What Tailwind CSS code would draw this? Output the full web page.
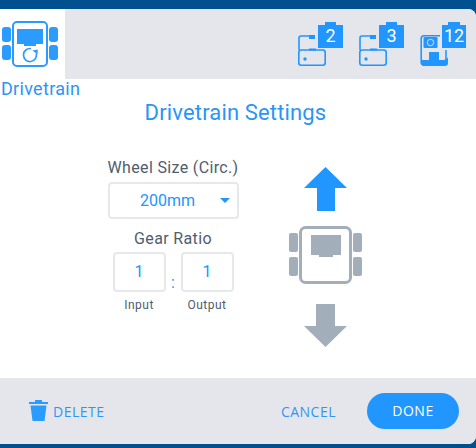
<!DOCTYPE html>
<html><head><meta charset="utf-8"><script src="https://cdn.jsdelivr.net/npm/@tailwindcss/browser@4"></script></head>
<body class="bg-[#00508f] m-0">
<div class="w-[476px] h-[448px] pt-[9px] overflow-hidden font-['Roboto',sans-serif]">
<div class="w-[476px] h-[435px] bg-white rounded-r-lg overflow-hidden flex flex-col">
  <div class="flex h-[70px] shrink-0">
    <div class="w-[65px] bg-white">
      <svg width="65" height="70" viewBox="0 9 65 70">
        <g fill="#2b9bff"><rect x="2" y="27" width="9" height="15" rx="3"/><rect x="2" y="45" width="9" height="15" rx="3"/><rect x="49" y="27" width="9" height="15" rx="3"/><rect x="49" y="45" width="9" height="15" rx="3"/></g>
        <rect x="13" y="22" width="34" height="44" rx="4" fill="none" stroke="#2b9bff" stroke-width="2"/>
        <path d="M17 29h26v15h-7v2H24v-2h-7z" fill="#2b9bff"/>
        <path d="M36.300 53.500A6.500 6.500 0 1 1 31 48.600" fill="none" stroke="#2b9bff" stroke-width="1.700"/>
        <path d="M32.500 50.500L37.800 49.500L37.500 54.500z" fill="#2b9bff"/>
      </svg>
    </div>
    <div class="flex-1 bg-[#e5e6eb] flex justify-end items-start pt-[13px] pr-[11px] gap-[16px]">
      <div class="relative w-[45px] h-[45px]">
        <svg width="45" height="45" viewBox="0 0 45 45" class="absolute left-0 top-0"><g fill="none" stroke="#2196ff" stroke-width="1.600"><path d="M15 14H3q-2 0-2 2v12"/><rect x="0.800" y="28" width="26.400" height="15.200" rx="2.500"/></g><rect x="11" y="13" width="6" height="4" fill="#2196ff"/><rect x="11" y="26.500" width="7" height="2" fill="#2196ff"/><circle cx="7" cy="37" r="1.700" fill="#2196ff"/></svg>
        <div class="absolute left-[20px] top-0 w-[25px] h-[26px] bg-[#2196ff] text-white text-[18px] leading-[28px] text-center [clip-path:polygon(0_3px,7px_3px,7px_0,18px_0,18px_3px,100%_3px,100%_100%,0_100%)]">2</div>
      </div>
      <div class="relative w-[45px] h-[45px]">
        <svg width="45" height="45" viewBox="0 0 45 45" class="absolute left-0 top-0"><g fill="none" stroke="#2196ff" stroke-width="1.600"><path d="M15 14H3q-2 0-2 2v12"/><rect x="0.800" y="28" width="26.400" height="15.200" rx="2.500"/></g><rect x="11" y="13" width="6" height="4" fill="#2196ff"/><rect x="11" y="26.500" width="7" height="2" fill="#2196ff"/><circle cx="7" cy="37" r="1.700" fill="#2196ff"/></svg>
        <div class="absolute left-[20px] top-0 w-[25px] h-[26px] bg-[#2196ff] text-white text-[18px] leading-[28px] text-center [clip-path:polygon(0_3px,7px_3px,7px_0,18px_0,18px_3px,100%_3px,100%_100%,0_100%)]">3</div>
      </div>
      <div class="relative w-[45px] h-[45px]">
        <svg width="45" height="45" viewBox="0 0 45 45" class="absolute left-0 top-0"><path d="M20 13.800H4q-2.800 0-2.800 2.800V40q0 3 3 3H23q3 0 3-3V28" fill="none" stroke="#2196ff" stroke-width="1.600"/><path d="M1 36q0 2 3 2h5V30h10v8h4q4 0 5-3v6q0 3-3 3H4q-3 0-3-3z" fill="#2196ff"/><rect x="3.500" y="15" width="14" height="11" rx="1" fill="#2196ff"/><circle cx="10.500" cy="20.500" r="3.200" fill="none" stroke="#cfe4fb" stroke-width="1"/></svg>
        <div class="absolute left-[22px] top-0 w-[24px] h-[26px] bg-[#2196ff] text-white text-[18px] leading-[28px] text-center [clip-path:polygon(0_3px,6px_3px,6px_0,18px_0,18px_3px,100%_3px,100%_100%,0_100%)]">12</div>
      </div>
    </div>
  </div>
  <div class="text-[18px] leading-[20px] text-[#2b95f5] pl-[1px] tracking-[0.3px]">Drivetrain</div>
  <div class="text-[22px] leading-[24px] text-[#2b95f5] text-center mt-[2px] tracking-[0.15px] -ml-[5px]">Drivetrain Settings</div>
  <div class="flex-1 flex">
    <div class="w-[130px] ml-[108px] flex flex-col items-center pt-[31px] text-[#4f5d6e]">
      <div class="text-[16px] leading-[24px] whitespace-nowrap tracking-[0.35px]">Wheel Size (Circ.)</div>
      <div class="relative w-[131px] h-[37px] mt-[2px] border-2 border-[#e6e8ec] rounded-[4px] text-[#2196ff] text-[16px] leading-[33px] text-center pr-[11px]">200mm
        <span class="absolute right-[7px] top-[14px] w-0 h-0 border-x-[5px] border-x-transparent border-t-[5px] border-t-[#2196ff]"></span>
      </div>
      <div class="text-[16px] leading-[24px] mt-[8px] tracking-[0.35px]">Gear Ratio</div>
      <div class="flex items-start w-[121px] mt-[1px] justify-between">
        <div class="flex flex-col items-center">
          <div class="w-[53px] h-[40px] border-2 border-[#e6e8ec] rounded-[4px] text-[#2196ff] text-[16px] leading-[36px] text-center">1</div>
          <div class="text-[12px] leading-[16px] mt-[5px] tracking-[0.5px]">Input</div>
        </div>
        <div class="text-[#2b95f5] text-[16px] leading-[20px] mt-[21px]">:</div>
        <div class="flex flex-col items-center">
          <div class="w-[53px] h-[40px] border-2 border-[#e6e8ec] rounded-[4px] text-[#2196ff] text-[16px] leading-[36px] text-center">1</div>
          <div class="text-[12px] leading-[16px] mt-[5px] tracking-[0.5px]">Output</div>
        </div>
      </div>
    </div>
    <div class="ml-[51px] w-[73px] flex flex-col items-center pt-[42px]">
      <svg width="44" height="44" viewBox="0 0 44 44" class="shrink-0"><path d="M21.500 0L43 21H31V44H13V21H0z" fill="#2196ff"/></svg>
      <svg width="73" height="58" viewBox="0 0 73 58" class="mt-[15px] shrink-0">
        <g fill="#a3aebb"><rect x="0" y="7" width="9" height="19" rx="2"/><rect x="0" y="31" width="9" height="19" rx="2"/><rect x="64" y="7" width="9" height="19" rx="2"/><rect x="64" y="31" width="9" height="19" rx="2"/><path d="M22 9h30v20h-8v2H30v-2h-8z"/></g>
        <rect x="11.500" y="1.500" width="50" height="55" rx="5" fill="none" stroke="#a3aebb" stroke-width="3"/>
      </svg>
      <svg width="44" height="44" viewBox="0 0 44 44" class="mt-[20px] shrink-0"><path d="M12 0H31V22H43L21.500 43L0 22H12z" fill="#a3aebb"/></svg>
    </div>
  </div>
  <div class="h-[66px] shrink-0 bg-[#e5e6eb] flex items-center pl-[29px] pr-[17px] font-['Open_Sans',sans-serif] text-[14px] tracking-[0.5px]">
    <svg width="19" height="21" viewBox="0 0 19 21" class="shrink-0 -mt-[1px]"><path d="M6 0h7v2h6v2H0V2h6zM1.500 5.500h16L15.500 21h-12z" fill="#2b9bff"/></svg>
    <span class="ml-[5px] text-[#2f96f5]">DELETE</span>
    <span class="ml-auto text-[#2f96f5]">CANCEL</span>
    <div class="ml-[31px] w-[92px] h-[36px] rounded-full bg-[#2196ff] text-white text-center leading-[36px]">DONE</div>
  </div>
</div></div>
</body></html>
